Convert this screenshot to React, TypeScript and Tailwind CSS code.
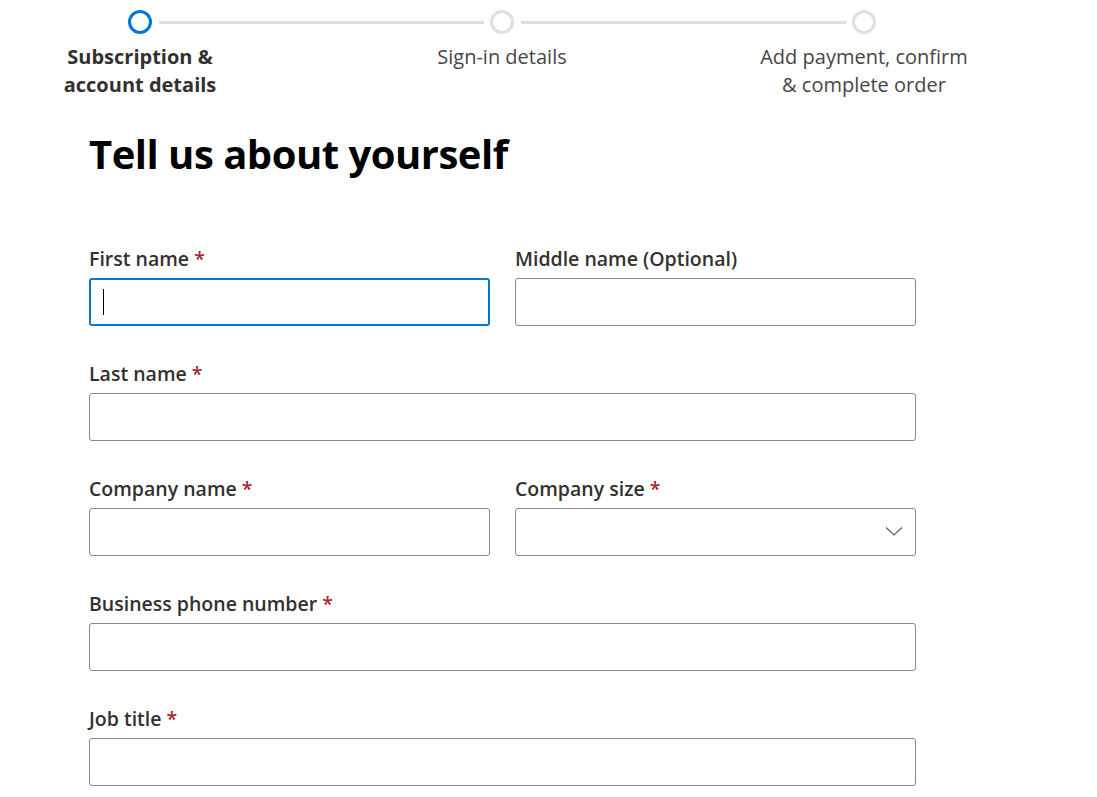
import React from "react";

const steps = [
  { label: ["Subscription &", "account details"], active: true },
  { label: ["Sign-in details"], active: false },
  { label: ["Add payment, confirm", "& complete order"], active: false },
];

function Req() {
  return <span className="text-[#a4262c]"> *</span>;
}

function Field({
  label,
  required,
  focused,
  select,
}: {
  label: string;
  required?: boolean;
  focused?: boolean;
  select?: boolean;
}) {
  return (
    <div className="flex flex-col">
      <label className="text-[19.5px] leading-[28px] font-semibold text-[#323130] mb-[5px]">
        {label}
        {required && <Req />}
      </label>
      <div
        className={
          "relative h-[48px] rounded-[3px] bg-white " +
          (focused ? "border-2 border-[#0078d4]" : "border border-[#8a8886]")
        }
      >
        {focused && (
          <span className="absolute left-[12px] top-[9px] w-px h-[26px] bg-black" />
        )}
        {select && (
          <svg
            className="absolute right-[12px] top-[16px]"
            width="18"
            height="12"
            viewBox="0 0 18 12"
            fill="none"
            stroke="#605e5c"
            strokeWidth="1.2"
          >
            <path d="M1 2.5 L9 10 L17 2.5" />
          </svg>
        )}
      </div>
    </div>
  );
}

export default function App() {
  return (
    <div
      className="w-[1097px] h-[797px] bg-white overflow-hidden"
      style={{ fontFamily: '"Open Sans", "Noto Sans", sans-serif' }}
    >
      {/* Stepper */}
      <div className="relative ml-[30px] flex gap-[142px] pt-[10px]">
        <div className="absolute top-[21px] left-[129px] w-[325px] h-[3px] bg-[#e1dfdd]" />
        <div className="absolute top-[21px] left-[491px] w-[325px] h-[3px] bg-[#e1dfdd]" />
        {steps.map((s, i) => (
          <div key={i} className="w-[220px] flex flex-col items-center">
            <div
              className={
                "w-[24px] h-[24px] rounded-full border-[3px] bg-white " +
                (s.active ? "border-[#0078d4]" : "border-[#e1dfdd]")
              }
            />
            <div
              className={
                "mt-[9px] text-center text-[20px] leading-[28px] " +
                (s.active ? "font-bold text-[#323130]" : "text-[#484644]")
              }
            >
              {s.label.map((l) => (
                <div key={l}>{l}</div>
              ))}
            </div>
          </div>
        ))}
      </div>

      {/* Form */}
      <div className="ml-[89px] w-[827px] mt-[29px]">
        <h1 className="text-[40px] leading-[52px] font-bold text-black tracking-[-0.5px]">
          Tell us about yourself
        </h1>
        <div className="mt-[65px] flex flex-col gap-[34px]">
          <div className="grid grid-cols-2 gap-x-[25px]">
            <Field label="First name" required focused />
            <Field label="Middle name (Optional)" />
          </div>
          <Field label="Last name" required />
          <div className="grid grid-cols-2 gap-x-[25px]">
            <Field label="Company name" required />
            <Field label="Company size" required select />
          </div>
          <Field label="Business phone number" required />
          <Field label="Job title" required />
        </div>
      </div>
    </div>
  );
}
